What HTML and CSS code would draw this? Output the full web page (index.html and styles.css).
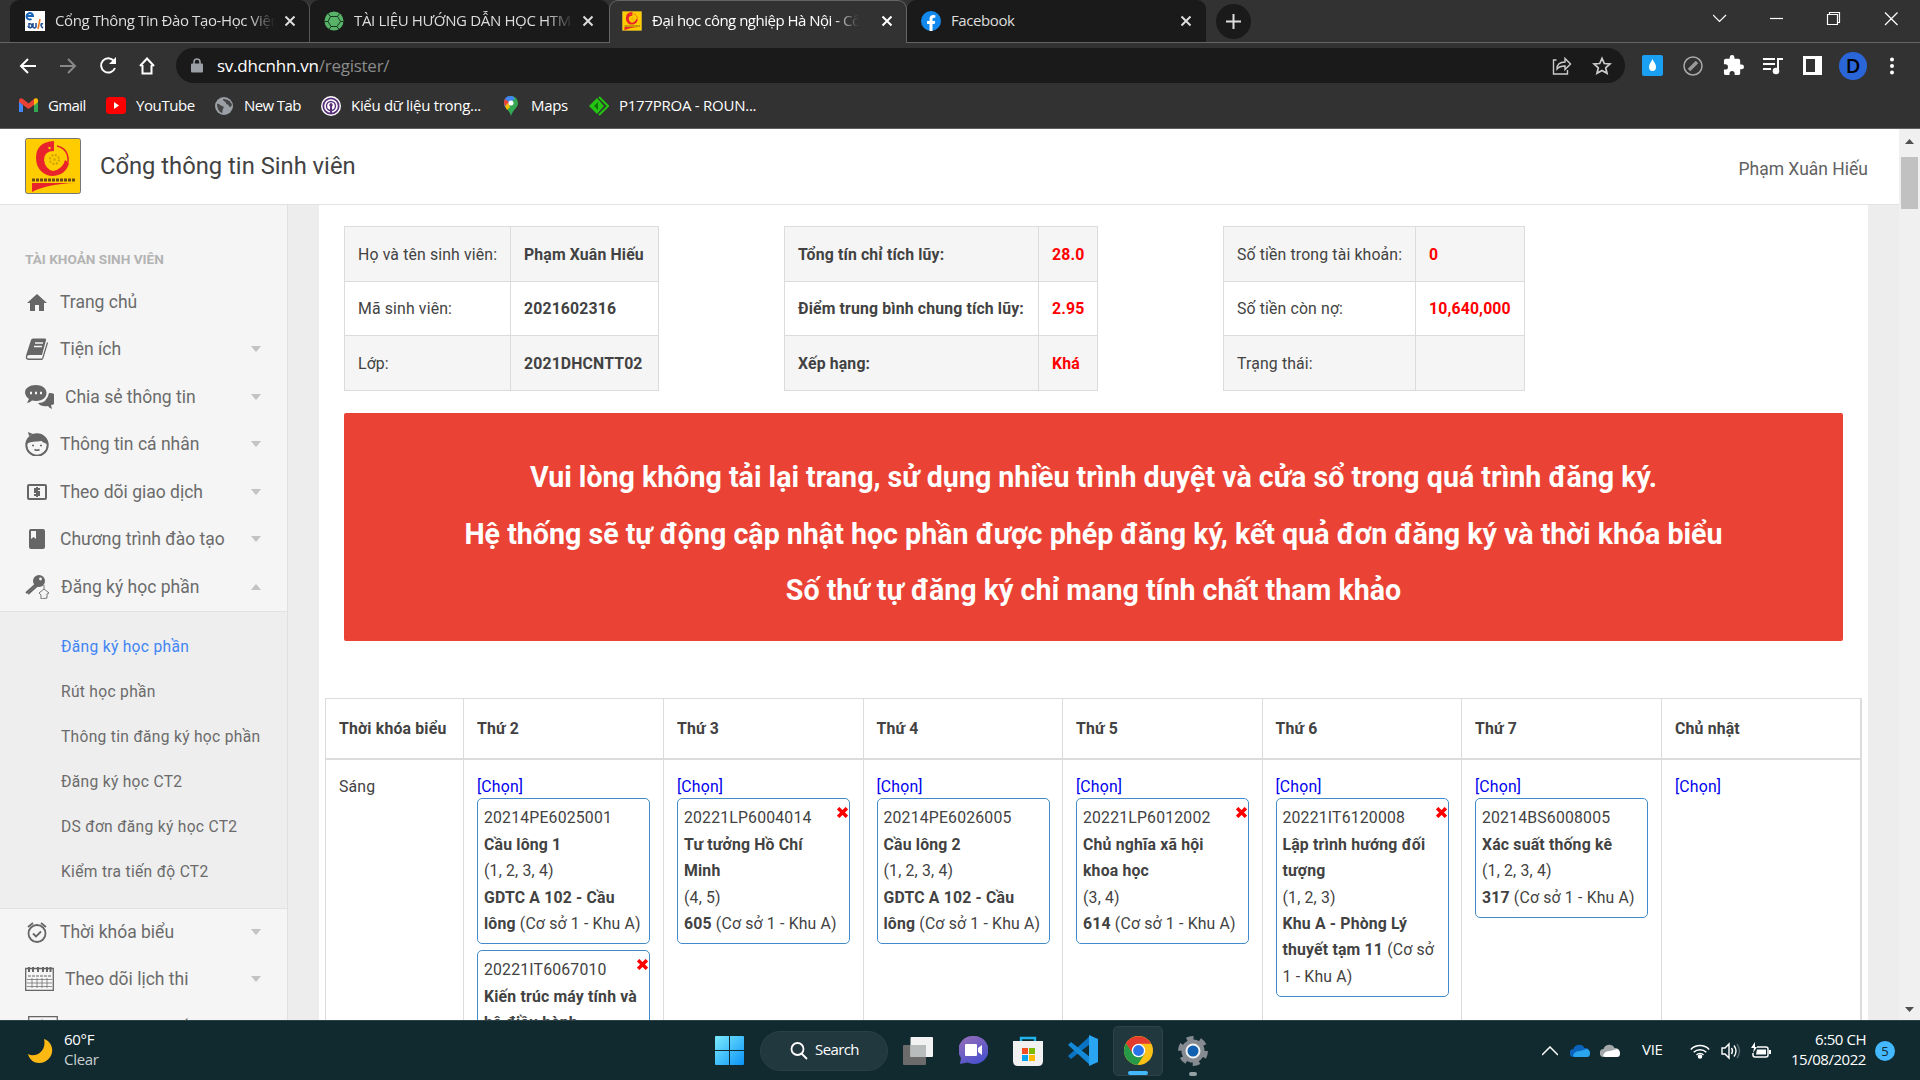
FILE: index.html
```html
<!DOCTYPE html>
<html lang="vi">
<head>
<meta charset="utf-8">
<title>Đại học công nghiệp Hà Nội - Cổng thông tin Sinh viên</title>
<link rel="stylesheet" href="styles.css">
</head>
<body>
<svg width="0" height="0" class="defs">
  <defs>
    <symbol id="x" viewBox="0 0 12 12"><path d="M1.500 1.500l9 9M10.500 1.500l-9 9" fill="none" stroke="currentColor" stroke-width="2"/></symbol>
    <symbol id="del" viewBox="0 0 11 11"><path d="M2.400 2.400l6.200 6.200M8.600 2.400L2.400 8.600" fill="none" stroke="#f00" stroke-width="3.500" stroke-linecap="square"/></symbol>
    <symbol id="haui" viewBox="0 0 56 56"><rect x=".5" y=".5" width="55" height="55" rx="2" fill="#fc0" stroke="#777"/><path d="M29 3Q11 4 11 20C11 31 19 38 28 38V33Q20 31 19 22Q19 13 29 13Z" fill="#e8232c"/><path d="M28 38Q41 37 44 25L40 22Q38 31 28 33Z" fill="#e8232c"/><path d="M32 8Q44 11 43 24" fill="none" stroke="#e8232c" stroke-width="1.500"/><circle cx="29.500" cy="21.500" r="4.500" fill="none" stroke="#c9a400" stroke-width="2" stroke-dasharray="2 1.500"/><circle cx="29.500" cy="21.500" r="1.500" fill="#d9ad00"/><circle cx="24.500" cy="10" r="1.200" fill="#fc0"/><path d="M7 42H50" stroke="#6b4a18" stroke-width="3" stroke-dasharray="3 1"/><path d="M7 45H50Q22 46 7 54Z" fill="#e8232c"/></symbol>
  </defs>
</svg>
<div class="screen">
  <div class="tabs">
    <div class="tab t1">
      <svg class="fav" viewBox="0 0 20 20"><rect width="20" height="20" fill="#fff"/><path d="M2 5H8A3.200 3.200 0 1 0 6.500 8" fill="none" stroke="#1562b5" stroke-width="2"/><path d="M4 12v5M3 15a2 2 0 1 0 1-2M8 12v4q2 2 3 0v-4M18 13q-2-1-2 1t2 3" fill="none" stroke="#1b4d94" stroke-width="1.500"/><path d="M13 18L15 8" stroke="#f47a20" stroke-width="1.600"/></svg>
      <span class="tt fade">Cổng Thông Tin Đào Tạo-Học Viện</span>
      <svg class="cl"><use href="#x"/></svg>
    </div>
    <div class="tab t2">
      <svg class="fav" viewBox="0 0 20 20"><circle cx="10" cy="10" r="9.500" fill="#58b368"/><path d="M6.500 5.500h7l3 5-3.500 5H7l-3-5zM6.500 5.500L4 2.500M13.500 5.500l2-3M16.500 10.500h3M13 15.500l2 3M7 15.500l-2 3M4 10.500H.5" fill="none" stroke="#173a23" stroke-width="1"/></svg>
      <span class="tt fade">TÀI LIỆU HƯỚNG DẪN HỌC HTML</span>
      <svg class="cl"><use href="#x"/></svg>
    </div>
    <div class="tab t3">
      <svg class="fav"><use href="#haui"/></svg>
      <span class="tt fade">Đại học công nghiệp Hà Nội - Cổng</span>
      <svg class="cl"><use href="#x"/></svg>
    </div>
    <div class="tab t4">
      <svg class="fav" viewBox="0 0 20 20"><circle cx="10" cy="10" r="10" fill="#1389ee"/><path d="M8.500 20v-7H6v-3h2.500V8c0-2.600 1.500-4 3.800-4l2 .2v2.500h-1.200c-1.200 0-1.600.7-1.600 1.500V10h2.700l-.5 3h-2.200v7z" fill="#fff"/></svg>
      <span class="tt">Facebook</span>
      <svg class="cl"><use href="#x"/></svg>
    </div>
    <div class="plus"><svg width="15" height="15" viewBox="0 0 15 15"><path d="M7.500 0v15M0 7.500h15" stroke="#ddd" stroke-width="2"/></svg></div>
    <svg class="winctl" width="186" height="36" viewBox="0 0 186 36" fill="none" stroke="#fff" stroke-width="1.200"><path d="M0 15l6.500 6.500L13 15"/><path d="M57 18.500h13"/><path d="M114.500 14.500h10v10h-10zM116.500 14.500v-2h10v10h-2"/><path d="M172 12.500l12.500 12.500M184.500 12.500L172 25"/></svg>
  </div>

  <div class="toolbar">
    <svg class="nav" width="150" height="22" viewBox="0 0 150 22" fill="none" stroke="#fff" stroke-width="2"><path d="M17 11H2M9 4L2 11l7 7"/><path d="M41 11h15M49 4l7 7-7 7" stroke="#888"/><path d="M95 6A7.200 7.200 0 1 0 96 13"/><path d="M97 2v7h-7z" fill="#fff" stroke="none"/><path d="M121 11l7-7.500 7 7.500M123.500 10v8.500h9V10"/></svg>
    <div class="url">
      <svg width="12" height="16" viewBox="0 0 12 16"><rect x="0" y="5.500" width="12" height="9" rx="1" fill="#9aa0a6"/><path d="M3 6V4a3 3 0 0 1 6 0v2" fill="none" stroke="#9aa0a6" stroke-width="1.600"/></svg>
      <span class="addr"><b>sv.dhcnhn.vn</b>/register/</span>
      <svg width="20" height="20" viewBox="0 0 20 20" fill="none" stroke="#ccc" stroke-width="1.400"><path d="M4.500 4H1.500v14h14v-4M5 13c0-5 3-7 8-7V2.500l5.500 5.500-5.500 5.500V10c-4 0-6 .5-8 3z"/></svg>
      <svg class="star" width="20" height="20" viewBox="0 0 20 20"><path d="M10 2.300l2.300 5.200 5.700.5-4.300 3.800 1.300 5.500-5-2.900-5 2.900 1.300-5.500L2 8l5.700-.5z" fill="none" stroke="#ccc" stroke-width="1.700"/></svg>
    </div>
    <div class="exts">
      <svg width="21" height="21" viewBox="0 0 21 21"><rect width="21" height="21" rx="2" fill="#1a9ff2"/><path d="M10.500 4c1 2.500 3.500 5 3.500 8a3.500 4 0 0 1-7 0c0-3 2.500-5.500 3.500-8z" fill="#fff"/></svg>
      <svg width="20" height="20" viewBox="0 0 20 20"><circle cx="10" cy="10" r="9" fill="none" stroke="#aaa" stroke-width="1.500"/><path d="M6 14l8-8" stroke="#999" stroke-width="3.500"/></svg>
      <svg width="21" height="21" viewBox="1 1 22 22"><path d="M20.500 11H19V7a2 2 0 0 0-2-2h-4V3.500a2.500 2.500 0 0 0-5 0V5H4a2 2 0 0 0-2 2v3.800h1.500a2.700 2.700 0 0 1 0 5.400H2V20a2 2 0 0 0 2 2h3.800v-1.500a2.700 2.700 0 0 1 5.400 0V22H17a2 2 0 0 0 2-2v-4h1.500a2.500 2.500 0 0 0 0-5z" fill="#fff"/></svg>
      <svg width="20" height="18" viewBox="0 0 20 18"><path d="M0 2h12M0 7h12M0 12h8M15 13V2h5" fill="none" stroke="#fff" stroke-width="2"/><circle cx="13" cy="14" r="3.300" fill="#fff"/></svg>
      <svg width="19" height="19" viewBox="0 0 19 19"><path d="M0 0h19v19H0zM3 3v13h9V3z" fill="#fff" fill-rule="evenodd"/></svg>
      <span class="avatar">D</span>
      <svg width="4" height="18" viewBox="0 0 4 18" fill="#fff"><circle cx="2" cy="2.500" r="2"/><circle cx="2" cy="9" r="2"/><circle cx="2" cy="15.500" r="2"/></svg>
    </div>
  </div>

  <div class="bookmarks">
    <div class="bm b1"><svg width="19" height="15" viewBox="0 0 19 15"><path d="M0 2v12h4V7z" fill="#4285f4"/><path d="M19 2v12h-4V7z" fill="#34a853"/><path d="M0 2Q1-1 4 1l5.500 4.500L15 1q3-2 4 1v2L9.500 11 0 4z" fill="#ea4335"/><path d="M15 1q3-2 4 1v2l-4 3.500z" fill="#fbbc04"/></svg><span>Gmail</span></div>
    <div class="bm b2"><svg width="20" height="17" viewBox="0 0 20 17"><rect width="20" height="17" rx="3.500" fill="#f00"/><path d="M8 5l5 3.500L8 12z" fill="#fff"/></svg><span>YouTube</span></div>
    <div class="bm b3"><svg width="18" height="18" viewBox="0 0 18 18"><circle cx="9" cy="9" r="9" fill="#9aa0a6"/><path d="M2 7c2-1 3 2 5 2s2 2 1 3 0 4-1 4C4 15 2 11 2 7zM8 2c0 3 3 2 3 4s3 1 3 3 2 1 3-1c-1-4-5-6-9-6z" fill="#444"/></svg><span>New Tab</span></div>
    <div class="bm b4"><svg width="20" height="20" viewBox="0 0 20 20"><circle cx="10" cy="10" r="10" fill="#fff"/><circle cx="10" cy="10" r="7.700" fill="none" stroke="#58307a" stroke-width="1.800"/><circle cx="10" cy="10" r="4.500" fill="none" stroke="#58307a" stroke-width="1.400"/><path d="M10 7a2 2 0 0 1 1 3.500V17H9v-6.500A2 2 0 0 1 10 7z" fill="#58307a"/></svg><span>Kiểu dữ liệu trong...</span></div>
    <div class="bm b5"><svg width="14" height="20" viewBox="0 0 14 20"><path d="M7 0a7 7 0 0 1 7 7c0 5-5 6-7 13C5 13 0 12 0 7a7 7 0 0 1 7-7z" fill="#34a853"/><path d="M0 7q0 3 2 5l9-10Q9 0 7 0 0 0 0 7z" fill="#4285f4"/><path d="M1 10l3-4 2 5-3 3z" fill="#fbbc04"/><path d="M1 3l4 3-4 4q-2-4 0-7z" fill="#ea4335"/><circle cx="7" cy="7" r="2.500" fill="#fff"/></svg><span>Maps</span></div>
    <div class="bm b6"><svg width="20" height="20" viewBox="0 0 20 20"><path d="M8 2l7 8-7 8-8-8z" fill="#23c412"/><path d="M10 1l9 9-9 9" fill="none" stroke="#23c412" stroke-width="2"/><path d="M5 10l4-4v8z" fill="#12720a"/></svg><span>P177PROA - ROUN...</span></div>
  </div>

  <div class="page">
    <div class="site">
      <header class="head"><svg class="logo"><use href="#haui"/></svg><span class="title">Cổng thông tin Sinh viên</span><span class="user">Phạm Xuân Hiếu</span></header>
      <div class="body">
        <nav class="side">
          <h2>TÀI KHOẢN SINH VIÊN</h2>
          <div class="mi"><svg viewBox="0 0 24 24"><path d="M2 13L12 4l10 9h-3v8h-5v-6h-4v6H5v-8z"/></svg><span>Trang chủ</span></div>
          <div class="mi"><svg viewBox="0 0 24 24"><path d="M8 1.500h12q1.500 0 1 1.500L17 18H4.500Q2 18 2 20q0 1.500 2 1.500h13L22 5l1 1-4.500 15q-.5 2-2 2H4q-4 0-3-4.500L6 3q.5-1.500 2-1.500z"/><path d="M10 6h8M9 9.500h8" stroke="#f5f5f5" stroke-width="1.500"/></svg><span>Tiện ích</span><i></i></div>
          <div class="mi wide"><svg viewBox="0 0 29 24"><path d="M24 8a7 6 0 0 1 2 12l1 4q-3-1-4-3-7 1-10-3Q22 18 24 8z"/><path d="M11 0C25 0 25 16 11 16l-4-.4Q5 18 2 18l2-4C-4 8 1 0 11 0z"/><path d="M5 8h2M10 8h2M15 8h2" stroke="#f5f5f5" stroke-width="2.500"/></svg><span>Chia sẻ thông tin</span><i></i></div>
          <div class="mi"><svg viewBox="0 0 24 24"><circle cx="12" cy="13" r="10.700" fill="none" stroke="#666" stroke-width="2"/><path d="M2 12C2 6 6 2 12 2s10 4 10 10c-4-1-5-3-6-3-4 1-11 0-14 3zM4 4L3 0l5 2z"/><path d="M7 13.500h2M15 13.500h2M9.500 17.500q2.500 1.500 5 0" fill="none" stroke="#666" stroke-width="1.500"/></svg><span>Thông tin cá nhân</span><i></i></div>
          <div class="mi"><svg viewBox="0 0 24 24"><rect x="3" y="5" width="18" height="14" rx="1" fill="none" stroke="#666" stroke-width="2"/><path d="M15 9H10v3h4v3H9M12 7v10" fill="none" stroke="#666" stroke-width="2"/></svg><span>Theo dõi giao dịch</span><i></i></div>
          <div class="mi"><svg viewBox="0 0 24 24"><path d="M6 2h12q2 0 2 2v16q0 2-2 2H6q-2 0-2-2V4q0-2 2-2zm0 2v8l2.500-2 2.500 2V4z" fill-rule="evenodd"/></svg><span>Chương trình đào tạo</span><i></i></div>
          <div class="mi key"><svg viewBox="0 0 24 24"><circle cx="14" cy="6" r="6"/><circle cx="15.500" cy="4" r="1.400" fill="#f5f5f5"/><path d="M11 9L1 18M13 10L3 19" fill="none" stroke="#666" stroke-width="2"/><path d="M19 10v4M14 18l5-4 5 4-2 1v4l-6 1v-4z" fill="none" stroke="#777" stroke-width="1"/></svg><span>Đăng ký học phần</span><i class="up"></i></div>
          <div class="sub"><a class="on">Đăng ký học phần</a><a>Rút học phần</a><a>Thông tin đăng ký học phần</a><a>Đăng ký học CT2</a><a>DS đơn đăng ký học CT2</a><a>Kiểm tra tiến độ CT2</a></div>
          <div class="mi"><svg viewBox="0 0 24 24" class="ln"><circle cx="12" cy="13.500" r="8.500" stroke-width="1.800"/><path d="M8 13.500l3 3 5-5M3 7l5-4M16 3l5 4" stroke-width="1.800"/></svg><span>Thời khóa biểu</span><i></i></div>
          <div class="mi wide exam"><svg viewBox="0 0 29 24" class="ln"><path d="M.7 1.500h27.600v22H.7z" stroke-width="1.300"/><path d="M4 0v5M8 0v5M13 0v5M18 0v5M22 0v5M25.500 0v5" stroke-width="2"/><path d="M3 9h24" stroke-dasharray="3 1"/><path d="M2 12.500h25M2 16h25M2 19.500h25M7 11v10M12 11v10M17 11v10M22 11v10" stroke-width=".7"/></svg><span>Theo dõi lịch thi</span><i></i></div>
          <div class="mi last"><svg viewBox="0 0 30 24" class="ln"><path d="M.7.700h28.600v23H.7z" stroke-width="1.300"/><circle cx="14" cy="8" r="4" stroke-width="1"/></svg><span>Thông tin quyết định</span></div>
        </nav>
        <main class="main">
          <div class="infos">
            <table class="info i1"><tr><td>Họ và tên sinh viên:</td><td><b>Phạm Xuân Hiếu</b></td></tr><tr><td>Mã sinh viên:</td><td><b>2021602316</b></td></tr><tr><td>Lớp:</td><td><b>2021DHCNTT02</b></td></tr></table>
            <table class="info i2 red"><tr><td><b>Tổng tín chỉ tích lũy:</b></td><td><b>28.0</b></td></tr><tr><td><b>Điểm trung bình chung tích lũy:</b></td><td><b>2.95</b></td></tr><tr><td><b>Xếp hạng:</b></td><td><b>Khá</b></td></tr></table>
            <table class="info i3 red"><tr><td>Số tiền trong tài khoản:</td><td><b>0</b></td></tr><tr><td>Số tiền còn nợ:</td><td><b>10,640,000</b></td></tr><tr><td>Trạng thái:</td><td></td></tr></table>
          </div>
          <div class="alert"><p>Vui lòng không tải lại trang, sử dụng nhiều trình duyệt và cửa sổ trong quá trình đăng ký.</p><p>Hệ thống sẽ tự động cập nhật học phần được phép đăng ký, kết quả đơn đăng ký và thời khóa biểu</p><p>Số thứ tự đăng ký chỉ mang tính chất tham khảo</p></div>
          <div class="week">
            <div class="th">Thời khóa biểu</div><div class="th">Thứ 2</div><div class="th">Thứ 3</div><div class="th">Thứ 4</div><div class="th">Thứ 5</div><div class="th">Thứ 6</div><div class="th">Thứ 7</div><div class="th">Chủ nhật</div>
            <div class="td">Sáng</div>
            <div class="td"><a>[Chọn]</a>
              <div class="card">20214PE6025001<br><b>Cầu lông 1</b><br>(1, 2, 3, 4)<br><b>GDTC A 102 - Cầu<br>lông</b> (Cơ sở 1 - Khu A)</div>
              <div class="card"><svg class="del"><use href="#del"/></svg>20221IT6067010<br><b>Kiến trúc máy tính và<br>hệ điều hành</b><br>(1, 2, 3)</div></div>
            <div class="td"><a>[Chọn]</a>
              <div class="card"><svg class="del"><use href="#del"/></svg>20221LP6004014<br><b>Tư tưởng Hồ Chí<br>Minh</b><br>(4, 5)<br><b>605</b> (Cơ sở 1 - Khu A)</div></div>
            <div class="td"><a>[Chọn]</a>
              <div class="card">20214PE6026005<br><b>Cầu lông 2</b><br>(1, 2, 3, 4)<br><b>GDTC A 102 - Cầu<br>lông</b> (Cơ sở 1 - Khu A)</div></div>
            <div class="td"><a>[Chọn]</a>
              <div class="card"><svg class="del"><use href="#del"/></svg>20221LP6012002<br><b>Chủ nghĩa xã hội<br>khoa học</b><br>(3, 4)<br><b>614</b> (Cơ sở 1 - Khu A)</div></div>
            <div class="td"><a>[Chọn]</a>
              <div class="card"><svg class="del"><use href="#del"/></svg>20221IT6120008<br><b>Lập trình hướng đối<br>tượng</b><br>(1, 2, 3)<br><b>Khu A - Phòng Lý<br>thuyết tạm 11</b> (Cơ sở<br>1 - Khu A)</div></div>
            <div class="td"><a>[Chọn]</a>
              <div class="card">20214BS6008005<br><b>Xác suất thống kê</b><br>(1, 2, 3, 4)<br><b>317</b> (Cơ sở 1 - Khu A)</div></div>
            <div class="td"><a>[Chọn]</a></div>
          </div>
        </main>
      </div>
    </div>
    <div class="scroll"><svg width="9" height="5" viewBox="0 0 9 5"><path d="M0 5l4.500-5L9 5z" fill="#505050"/></svg><div class="thumb"></div><svg width="9" height="5" viewBox="0 0 9 5"><path d="M0 0l4.500 5L9 0z" fill="#505050"/></svg></div>
  </div>

  <footer class="task">
    <div class="weather"><svg width="26" height="26" viewBox="0 0 26 26"><path d="M17 1C26 4 28 15 21 21.500 14 28 3 25 1 16c7 4 19-2 16-15z" fill="#fdb913"/></svg><div class="up1"><div>60°F</div><div class="dim">Clear</div></div></div>
    <div class="apps">
      <svg class="win" width="29" height="29" viewBox="0 0 29 29"><defs><linearGradient id="w" x1="0" y1="0" x2="1" y2="1"><stop offset="0" stop-color="#7cebff"/><stop offset="1" stop-color="#0a93f5"/></linearGradient></defs><path d="M1 0h13v14H0V1q0-1 1-1zM15 0h13q1 0 1 1v13H15zM0 15h14v14H1q-1 0-1-1zM15 15h14v13q0 1-1 1H15z" fill="url(#w)"/></svg>
      <div class="search"><svg width="18" height="18" viewBox="0 0 18 18" fill="none" stroke="#fff" stroke-width="1.800"><circle cx="7.500" cy="7" r="6"/><path d="M11.500 11.500L17 17"/></svg><span class="up1">Search</span></div>
      <div class="ic"><svg width="30" height="28" viewBox="0 0 30 28"><rect y="8" width="23" height="20" rx="1" fill="#6b6b6b"/><rect x="7.500" width="22.500" height="20" rx="1" fill="#f2f2f2"/><path d="M7.500 8H23v12H7.500z" fill="#b9bcbd"/></svg></div>
      <div class="ic"><svg width="29" height="29" viewBox="0 0 29 29"><defs><linearGradient id="c" x1="0" y1="0" x2=".6" y2="1"><stop offset="0" stop-color="#9a6fb8"/><stop offset="1" stop-color="#4c52cd"/></linearGradient></defs><path d="M14.500 0a14.500 14 0 1 1-6 26.500L1 28l1-6A14.500 14 0 0 1 14.500 0z" fill="url(#c)"/><path d="M7 8h10q1 0 1 1v10q0 1-1 1H7q-1 0-1-1V9q0-1 1-1zM19 12l4-3v10l-4-3z" fill="#fff"/></svg></div>
      <div class="ic"><svg width="30" height="30" viewBox="0 0 30 30"><path d="M8 6V2h14v4" fill="none" stroke="#1fb3e8" stroke-width="2.400"/><path d="M0 5h30v20q0 5-5 5H5q-5 0-5-5z" fill="#f1f1f1"/><path d="M9 12h6v6H9z" fill="#f25022"/><path d="M16 12h6v6h-6z" fill="#7fba00"/><path d="M9 19h6v6H9z" fill="#00a4ef"/><path d="M16 19h6v6h-6z" fill="#ffb900"/></svg></div>
      <div class="ic"><svg width="30" height="31" viewBox="0 0 30 31"><path d="M22 1L0 21l3 3L22 9z" fill="#0a74c4"/><path d="M0 10l3-3 19 15v8z" fill="#1389d8"/><path d="M21 0l9 4v23l-9 4z" fill="#2aa5f2"/></svg></div>
      <div class="ic act"><svg width="29" height="29" viewBox="0 0 30 30"><circle cx="15" cy="15" r="15" fill="#fbc116"/><path d="M2 7.500A15 15 0 0 1 28 8H15l-6.500 11z" fill="#e33b2e"/><path d="M2 7.500A15 15 0 0 0 14 30l7.500-12H9z" fill="#269a46"/><circle cx="15" cy="15" r="7" fill="#fff"/><circle cx="15" cy="15" r="5.600" fill="#2a74ea"/></svg></div>
      <div class="ic dot"><svg width="30" height="30" viewBox="0 0 30 30"><circle cx="15" cy="15" r="11.500" fill="#858b90"/><circle cx="15" cy="15" r="12.700" fill="none" stroke="#858b90" stroke-width="4.500" stroke-dasharray="6.800 6.500"/><circle cx="15" cy="15" r="6.500" fill="#1161b0" stroke="#f3f3f3" stroke-width="2"/></svg></div>
    </div>
    <div class="tray">
      <svg width="16" height="10" viewBox="0 0 16 10"><path d="M0 9l8-8 8 8" fill="none" stroke="#fff" stroke-width="1.500"/></svg>
      <svg class="od" width="20" height="13" viewBox="0 0 20 13"><path d="M4 13a4 4 0 0 1-.5-8A6 6 0 0 1 14.500 4 4.500 4.500 0 0 1 16 13z" fill="#0a64bd"/><path d="M3 12q1-5 7-5l7-2q3 1 3 4.500T17 13H5z" fill="#2aa6ee"/></svg>
      <svg class="od2" width="20" height="13" viewBox="0 0 20 13"><path d="M4 13a4 4 0 0 1-.5-8A6 6 0 0 1 14.500 4 4.500 4.500 0 0 1 16 13z" fill="#a2a7a9"/><path d="M3 12q1-5 7-5l7-2q3 1 3 4.500T17 13H5z" fill="#fff"/></svg>
      <span class="vie up1">VIE</span>
      <svg class="wifi" width="20" height="16" viewBox="0 0 20 16" fill="none" stroke="#fff" stroke-width="1.500"><path d="M.8 6.500a12.800 12.800 0 0 1 18.400 0M3.700 9.300a8.800 8.800 0 0 1 12.600 0M6.500 12a5 5 0 0 1 7 0"/><circle cx="10" cy="13.500" r="1.500" fill="#fff"/></svg>
      <svg class="spk" width="20" height="18" viewBox="0 0 20 18" fill="none" stroke="#fff" stroke-width="1.400"><path d="M1 6h3l4-4v14l-4-4H1zM10.500 6q2 3 0 6M13 3.500q4 5.500 0 11"/><path d="M16 2q5 7 0 14" stroke="#57696e"/></svg>
      <svg class="bat" width="20" height="17" viewBox="0 0 20 17"><path d="M6 5h9q2 0 2 2v6q0 2-2 2H4q-2 0-2-2v-2" fill="none" stroke="#fff" stroke-width="1.500"/><path d="M6 7.500h9v5H5zM18 8h2v4h-2zM4 0L0 6h3l-1 5 4-6H4z" fill="#fff"/></svg>
      <div class="clock up1"><div>6:50 CH</div><div>15/08/2022</div></div>
      <span class="badge">5</span>
    </div>
  </footer>
</div>
</body>
</html>
```
FILE: styles.css
```css
* { box-sizing: border-box; }
body { margin: 0; }
.defs { position: absolute; }
svg { display: block; flex: none; }
.screen { width: 1920px; height: 1080px; overflow: hidden; display: flex; flex-direction: column; font-family: "Open Sans", "Noto Sans", sans-serif; color: #fff; white-space: nowrap; }
.up1 { padding-bottom: 3px; }

/* browser chrome */
.tabs { height: 43px; background: #323232; display: flex; padding-left: 10px; border-bottom: 1px solid #656565; }
.tab { height: 42px; background: #1a1a1a; border-radius: 9px 9px 0 0; display: flex; align-items: center; font-size: 15px; color: #ddd; }
.t1 { width: 300px; padding-left: 15px; border-right: 1px solid #555; }
.t2 { width: 299px; padding-left: 14px; }
.t3 { width: 298px; height: 43px; padding: 0 0 2px 12px; background: #323232; border: 1px solid #656565; border-bottom: 0; color: #fff; }
.t4 { width: 299px; padding-left: 14px; }
.fav { width: 20px; height: 20px; margin-right: 10px; }
.tt { width: 220px; padding-bottom: 2px; overflow: hidden; letter-spacing: -0.4px; }
.t2 .tt { width: 219px; letter-spacing: -0.35px; }
.t3 .tt { width: 207px; letter-spacing: -0.5px; }
.t4 .tt { width: 220px; }
.fade { -webkit-mask-image: linear-gradient(90deg, #000 88%, transparent); mask-image: linear-gradient(90deg, #000 88%, transparent); }
.cl { width: 12px; height: 12px; margin-left: 9px; }
.t3 .cl { margin-left: 22px; }
.plus { width: 35px; height: 35px; margin: 4px 0 0 10px; border-radius: 50%; background: #1a1a1a; display: grid; place-items: center; }
.winctl { margin-left: auto; margin-right: 21px; }
.toolbar { height: 45px; background: #323232; display: flex; align-items: center; padding-left: 19px; }
.nav { margin-right: 7px; }
.url { width: 1449px; height: 35px; border-radius: 18px; background: #1a1a1a; display: flex; align-items: center; padding: 0 13px 0 15px; }
.addr { flex: 1; margin-left: 14px; font-size: 17px; letter-spacing: -0.25px; color: #8b8b8b; }
.addr b { font-weight: 400; color: #fff; }
.star { margin-left: 20px; }
.exts { flex: 1; display: flex; align-items: center; justify-content: space-between; padding: 0 26px 0 17px; }
.avatar { width: 28px; height: 28px; margin: 0 3px 0 -3px; border-radius: 50%; background: #2b66d8; color: #000; font-weight: 600; font-size: 20px; line-height: 28px; text-align: center; }
.bookmarks { height: 41px; background: #323232; border-bottom: 1px solid #606060; display: flex; align-items: center; padding: 0 0 5px 19px; font-size: 15px; }
.bm { display: flex; align-items: center; gap: 10px; letter-spacing: -0.3px; }
.bm span { padding-bottom: 2px; }
.b1 { width: 87px; letter-spacing: -0.6px; } .b2 { width: 109px; letter-spacing: -0.4px; } .b3 { width: 106px; gap: 11px; letter-spacing: -0.6px; } .b4 { width: 183px; } .b5 { width: 85px; gap: 13px; } .b6 { letter-spacing: -0.25px; }

/* site */
.page { height: 891px; display: flex; font-family: Roboto, "Open Sans", sans-serif; color: #424242; }
.site { width: 1899px; display: flex; flex-direction: column; background: #fff; }
.head { height: 76px; border-bottom: 1px solid #e2e2e2; display: flex; align-items: center; padding: 0 31px 1px 25px; }
.logo { width: 56px; height: 56px; }
.title { margin-left: 19px; font-size: 23.75px; }
.user { margin-left: auto; font-size: 17.5px; color: #616161; padding-top: 5px; }
.body { height: 815px; display: flex; background: #ededed; overflow: hidden; }
.side { width: 288px; background: #f5f5f5; border-right: 1px solid #e0e0e0; color: #6b6b6b; }
.side h2 { margin: 43px 0 8px 25px; font-size: 13.6px; line-height: 22px; font-weight: 700; color: #b3b3b3; }
.mi { height: 47.5px; display: flex; align-items: center; padding: 0 26px 0 25px; font-size: 17.5px; }
.mi svg { width: 24px; height: 24px; margin-right: 11px; fill: #666; }
.mi.key svg { margin-right: 12px; }
.mi.exam { padding-bottom: 2px; }
.mi.wide svg { width: 29px; }
.mi svg.ln { fill: none; stroke: #666; }
.mi i { margin-left: auto; border: 5.5px solid transparent; border-top: 6px solid #c3c3c3; border-bottom: 0; }
.mi i.up { border-top: 0; border-bottom: 6px solid #c3c3c3; }
.mi.last { padding: 1px 0 0 28px; }
.mi.last svg { width: 30px; margin-right: 14px; }
.sub { height: 298px; background: #eee; border: solid #e2e2e2; border-width: 1px 0; padding: 13px 0 0 61px; font-size: 15.6px; letter-spacing: .3px; }
.sub a { display: block; line-height: 45px; }
.sub .on { color: #4285f4; }
.main { width: 1549px; height: 815px; margin-left: 31px; background: #fff; padding: 21px 0 0 6px; }
.infos { display: flex; padding-left: 19px; }
.info { border-collapse: collapse; table-layout: fixed; font-size: 15.8px; height: 165px; border: 1px solid #dcdcdc; letter-spacing: .15px; }
.info td { padding: 1px 0 0 13px; border: 1px solid #dcdcdc; }
.info tr:nth-child(odd) { background: #f5f5f5; }
.info tr { height: 54.5px; }
.i1 { width: 315px; } .i1 td:first-child { width: 166px; }
.i2 { width: 314px; margin-left: 125px; } .i2 td:first-child { width: 254px; }
.i3 { width: 302px; margin-left: 125px; } .i3 td:first-child { width: 192px; }
.red td:last-child { color: #f00; }
.alert { width: 1499px; height: 228px; margin: 22px 0 57px 19px; padding-top: 36px; background: #ea4335; border-radius: 2px; color: #fff; font-size: 28.6px; font-weight: 700; text-align: center; }
.alert p { margin: 0; line-height: 56.5px; }
.week { width: 1537px; display: grid; grid-template-columns: 137px 200px 199.5px 199.5px 199.5px 199.5px 200px 1fr; border: 1px solid #dcdcdc; border-right-width: 2px; font-size: 15.8px; letter-spacing: .18px; }
.th, .td { padding-left: 13px; border-left: 1px solid #dcdcdc; }
.th:nth-child(8n+1), .td:nth-child(8n+1) { border-left: 0; }
.th { height: 61px; line-height: 60px; font-weight: 700; border-bottom: 2px solid #dcdcdc; }
.td { height: 420px; padding-top: 14px; line-height: 26.4px; }
.td a { display: block; color: #00e; }
.card { position: relative; width: 173px; border: 1px solid #428bca; border-radius: 5px; padding: 6px; margin-bottom: 6px; margin-top: -2px; }
.card + .card { margin-top: 0; }
.del { position: absolute; right: 1px; top: 8px; width: 11px; height: 11px; }
.scroll { width: 21px; background: #f0f0f0; display: flex; flex-direction: column; align-items: center; padding: 10px 0 8px; }
.thumb { width: 17px; height: 52px; margin: 13px 0 auto; background: #c1c1c1; }

/* taskbar */
.task { height: 60px; background: #112a30; border-top: 1px solid #2c4247; display: flex; align-items: center; font-size: 15px; }
.weather { width: 715px; padding-left: 27px; display: flex; align-items: center; gap: 11px; line-height: 20.5px; letter-spacing: -0.3px; }
.dim { color: #c9cfd1; }
.apps { width: 835px; display: flex; align-items: center; }
.apps > * { flex: none; }
.search { width: 128px; height: 40px; margin: 0 5px 0 16px; border-radius: 20px; background: #21383e; border: 1px solid #2a4046; display: flex; align-items: center; gap: 7px; padding-left: 29px; letter-spacing: -0.6px; }
.ic { width: 50px; height: 50px; margin-right: 5px; display: grid; place-items: center; position: relative; }
.act { background: #21383e; border: 1px solid #2c4349; border-radius: 5px; }
.act::after, .dot::after { content: ""; position: absolute; left: 14px; bottom: 0; width: 20px; height: 4px; border-radius: 2px; background: #43b8ff; }
.dot::after { left: 21px; width: 8px; background: #94a0a4; }
.tray { display: flex; align-items: center; margin-left: -8px; flex: 1; }
.od { margin-left: 12px; } .od2 { margin-left: 10px; }
.vie { width: 48px; margin-left: 22px; letter-spacing: -0.3px; }
.wifi { margin-right: 11px; }
.spk { margin-right: 10px; }
.clock { width: 95px; text-align: right; line-height: 20.5px; letter-spacing: -0.45px; }
.badge { width: 20px; height: 20px; margin-left: 9px; border-radius: 50%; background: #43b8ff; color: #112a30; font-size: 13px; line-height: 20px; text-align: center; }
```
